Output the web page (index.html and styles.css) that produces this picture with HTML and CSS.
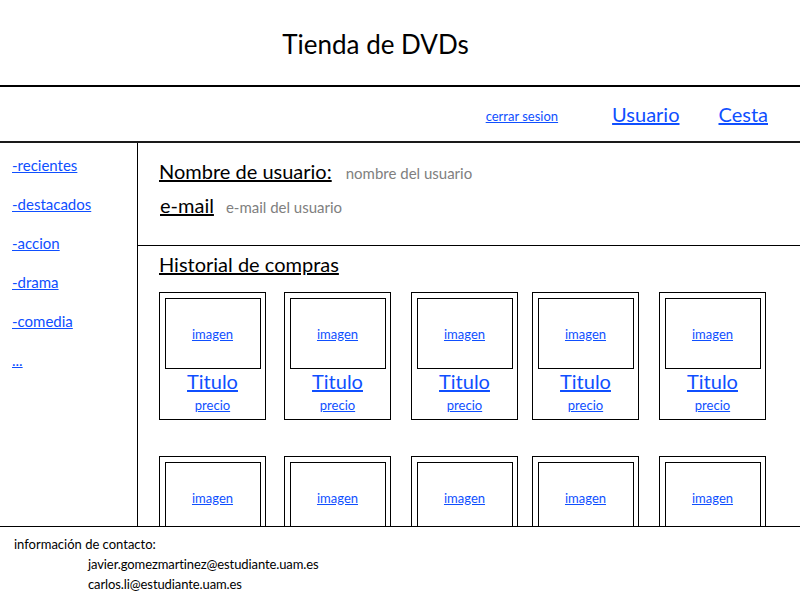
FILE: index.html
```html
<!DOCTYPE html>
<html lang="es">
<head>
<meta charset="utf-8">
<title>Tienda de DVDs</title>
<link rel="stylesheet" href="styles.css">
</head>
<body>
<div class="page">
  <header class="header">
    <h1 class="title">Tienda de DVDs</h1>
  </header>
  <nav class="topnav">
    <a href="#" class="logout">cerrar sesion</a>
    <a href="#" class="navlink">Usuario</a>
    <a href="#" class="navlink cart">Cesta</a>
  </nav>
  <div class="middle">
    <aside class="sidebar">
      <a href="#">-recientes</a>
      <a href="#">-destacados</a>
      <a href="#">-accion</a>
      <a href="#">-drama</a>
      <a href="#">-comedia</a>
      <a href="#">...</a>
    </aside>
    <main class="main">
      <section class="userinfo">
        <div class="field"><span class="label">Nombre de usuario:</span><span class="value">nombre del usuario</span></div>
        <div class="field field-email"><span class="label">e-mail</span><span class="value">e-mail del usuario</span></div>
      </section>
      <section class="history">
        <h2 class="section-title">Historial de compras</h2>
        <div class="grid">
          <div class="card"><div class="image"><a href="#">imagen</a></div><a href="#" class="card-title">Titulo</a><a href="#" class="price">precio</a></div>
          <div class="card"><div class="image"><a href="#">imagen</a></div><a href="#" class="card-title">Titulo</a><a href="#" class="price">precio</a></div>
          <div class="card"><div class="image"><a href="#">imagen</a></div><a href="#" class="card-title">Titulo</a><a href="#" class="price">precio</a></div>
          <div class="card"><div class="image"><a href="#">imagen</a></div><a href="#" class="card-title">Titulo</a><a href="#" class="price">precio</a></div>
          <div class="card"><div class="image"><a href="#">imagen</a></div><a href="#" class="card-title">Titulo</a><a href="#" class="price">precio</a></div>
          <div class="card"><div class="image"><a href="#">imagen</a></div><a href="#" class="card-title">Titulo</a><a href="#" class="price">precio</a></div>
          <div class="card"><div class="image"><a href="#">imagen</a></div><a href="#" class="card-title">Titulo</a><a href="#" class="price">precio</a></div>
          <div class="card"><div class="image"><a href="#">imagen</a></div><a href="#" class="card-title">Titulo</a><a href="#" class="price">precio</a></div>
          <div class="card"><div class="image"><a href="#">imagen</a></div><a href="#" class="card-title">Titulo</a><a href="#" class="price">precio</a></div>
          <div class="card"><div class="image"><a href="#">imagen</a></div><a href="#" class="card-title">Titulo</a><a href="#" class="price">precio</a></div>
        </div>
      </section>
    </main>
  </div>
  <footer class="footer">
    <p class="contact-title">información de contacto:</p>
    <p class="contact-mail">javier.gomezmartinez@estudiante.uam.es</p>
    <p class="contact-mail">carlos.li@estudiante.uam.es</p>
  </footer>
</div>
</body>
</html>
```
FILE: styles.css
```css
* { box-sizing: border-box; }
html, body { margin: 0; padding: 0; background: #fff; }
body { font-family: Lato, "Open Sans", sans-serif; color: #000; }
a { color: #0f4fff; }

.page { width: 800px; height: 600px; display: flex; flex-direction: column; overflow: hidden; }

.header { height: 87px; border-bottom: 2px solid #000; display: flex; justify-content: center; padding-right: 49px; }
.title { margin: 0; padding-top: 27px; font-size: 26px; font-weight: 400; line-height: 34px; }

.topnav { height: 56px; border-bottom: 2px solid #1a1a1a; display: flex; justify-content: flex-end; align-items: center; padding-right: 32px; }
.logout { font-size: 13px; margin-right: 54px; margin-top: 4px; }
.navlink { font-size: 20px; }
.cart { margin-left: 39px; }

.middle { flex: 1; display: flex; min-height: 0; }
.sidebar { width: 138px; border-right: 1px solid #000; display: flex; flex-direction: column; padding: 12px 0 0 12px; gap: 18px; }
.sidebar a { font-size: 15px; line-height: 21px; }

.main { flex: 1; overflow: hidden; }
.userinfo { height: 103px; border-bottom: 1px solid #000; padding: 15px 0 0 21px; }
.field { display: flex; align-items: baseline; }
.label { font-size: 20px; text-decoration: underline; line-height: 26px; }
.value { font-size: 15px; color: #808080; margin-left: 14px; }
.field-email { margin-top: 8px; padding-left: 1px; }
.field-email .value { margin-left: 12px; }

.history { padding: 5px 0 0 21px; }
.section-title { margin: 0; font-size: 20px; font-weight: 400; text-decoration: underline; line-height: 26px; }
.grid { display: grid; grid-template-columns: 125px 127px 121px 127px 107px; row-gap: 36px; margin-top: 15px; }
.card { width: 107px; height: 128px; border: 1.5px solid #000; padding: 5px 5px 0 5px; display: flex; flex-direction: column; align-items: center; }
.image { width: 96px; height: 71px; border: 1.5px solid #000; display: flex; align-items: center; justify-content: center; }
.image a { font-size: 13px; }
.card-title { font-size: 20px; line-height: 24px; margin-top: 0; }
.price { font-size: 13px; line-height: 18px; margin-top: 3px; }

.footer { height: 74px; border-top: 1px solid #000; padding: 7px 0 0 14px; }
.footer p { margin: 0; font-size: 13px; line-height: 20px; }
.contact-mail { padding-left: 74px; letter-spacing: -0.1px; }
```
